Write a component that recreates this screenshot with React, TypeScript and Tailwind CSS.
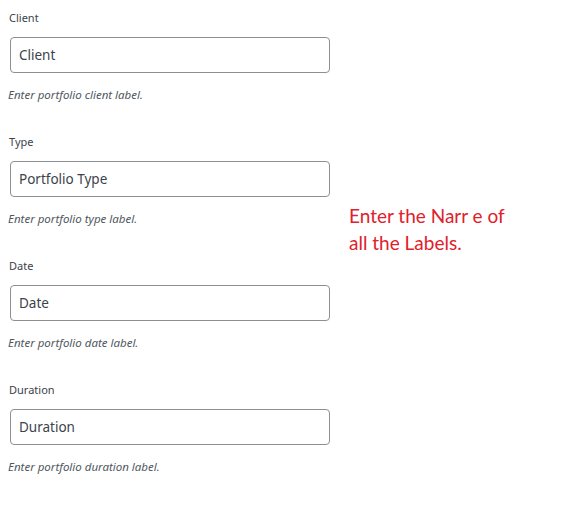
const fields = [
  { label: 'Client', value: 'Client', help: 'Enter portfolio client label.' },
  { label: 'Type', value: 'Portfolio Type', help: 'Enter portfolio type label.' },
  { label: 'Date', value: 'Date', help: 'Enter portfolio date label.' },
  { label: 'Duration', value: 'Duration', help: 'Enter portfolio duration label.' },
];

function Field({ label, value, help }: { label: string; value: string; help: string }) {
  return (
    <div className="flex flex-col">
      <div className="text-[11px] leading-[14px] text-[#3c434a] pl-[1px]">{label}</div>
      <div className="mt-[12px] ml-[2px] h-[36px] w-[320px] rounded-[4px] border border-[#8c8f94] bg-white flex items-center px-[8px] text-[13.5px] text-[#3c434a]">
        {value}
      </div>
      <div className="mt-[15px] text-[11.5px] leading-[14px] italic text-[#50575e]">{help}</div>
    </div>
  );
}

export default function App() {
  return (
    <div className="w-[570px] h-[507px] bg-white flex" style={{ fontFamily: '"Noto Sans", "Open Sans", sans-serif' }}>
      <div className="w-[340px] pl-[8px] pt-[11px] flex flex-col gap-[33px]">
        {fields.map((f) => (
          <Field key={f.label} {...f} />
        ))}
      </div>
      <div
        className="pl-[9px] pt-[202px] text-[19px] leading-[27px] text-[#e0202a]"
        style={{ fontFamily: 'Lato, "Open Sans", sans-serif' }}
      >
        <div>Enter the Narr e of</div>
        <div>all the Labels.</div>
      </div>
    </div>
  );
}
